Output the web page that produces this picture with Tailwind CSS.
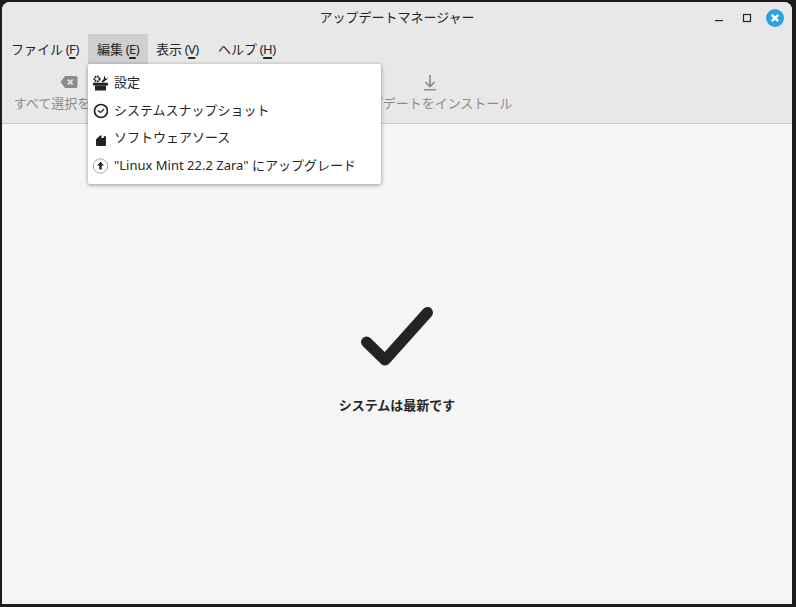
<!DOCTYPE html>
<html lang="ja">
<head>
  <meta charset="UTF-8" />
  <title>アップデートマネージャー</title>
  <script src="https://cdn.jsdelivr.net/npm/@tailwindcss/browser@4"></script>
</head>
<body class="bg-[#1c1c1c] w-[796px] h-[607px] overflow-hidden font-['Noto_Sans','Noto_Sans_CJK_JP',sans-serif] text-[13px] text-[#262626]">
  <div class="relative ml-[2px] mt-[2px] w-[790px] h-[602px] rounded-t-[8px] bg-[#f5f5f5] flex flex-col overflow-hidden">

    <!-- title bar -->
    <header class="relative h-[32px] shrink-0 bg-[#e8e8e8] flex items-center justify-center">
      <span>アップデートマネージャー</span>
      <div class="absolute right-[8px] top-[7px] flex items-center gap-[10px]">
        <svg width="16" height="18" viewBox="0 0 16 18"><rect x="1" y="11" width="8" height="1.2" fill="#262626"/></svg>
        <svg width="16" height="18" viewBox="0 0 16 18"><rect x="3.500" y="5.500" width="7" height="7" fill="none" stroke="#262626" stroke-width="1.200"/></svg>
        <svg width="18" height="18" viewBox="0 0 18 18"><circle cx="9" cy="9" r="9" fill="#2ba3e0"/><path d="M5.800 5.800l6.400 6.400M12.200 5.800l-6.400 6.400" stroke="#fff" stroke-width="2.400"/></svg>
      </div>
    </header>

    <!-- menu bar -->
    <nav class="h-[30px] shrink-0 bg-[#e8e8e8] flex">
      <div class="w-[86px] pl-[9px] pt-[2px] flex items-center whitespace-pre">ファイル<span class="tracking-[-0.6px]"> (<u class="decoration-[1.5px] underline-offset-[3px]">F</u>)</span></div>
      <div class="w-[60px] pl-[9px] pt-[2px] flex items-center bg-[#cfcfcf] whitespace-pre">編集<span class="tracking-[-0.6px]"> (<u class="decoration-[1.5px] underline-offset-[3px]">E</u>)</span></div>
      <div class="w-[61px] pl-[8px] pt-[2px] flex items-center whitespace-pre">表示<span class="tracking-[-0.6px]"> (<u class="decoration-[1.5px] underline-offset-[3px]">V</u>)</span></div>
      <div class="pl-[9px] pt-[2px] flex items-center whitespace-pre">ヘルプ<span class="tracking-[-0.6px]"> (<u class="decoration-[1.5px] underline-offset-[3px]">H</u>)</span></div>
    </nav>

    <!-- toolbar -->
    <div class="h-[60px] shrink-0 bg-[#e8e8e8] border-b border-[#c8c8c8] flex text-[#8c8c8c]">
      <div class="ml-[8px] w-[110px] flex flex-col items-center pt-[11px] gap-[5px]">
        <svg class="ml-[8px]" width="18" height="14" viewBox="0 0 18 14"><path fill-rule="evenodd" fill="#8c8c8c" d="M5 1h11a1.500 1.500 0 0 1 1.500 1.500v9A1.500 1.500 0 0 1 16 13H5L0.500 7zM8.500 4L7.300 5.200 9.100 7 7.300 8.800 8.500 10l1.800-1.800L12.100 10l1.200-1.200L11.500 7l1.800-1.800L12.100 4l-1.800 1.800z"/></svg>
        <span class="whitespace-nowrap">すべて選択を解除</span>
      </div>
      <div class="ml-auto mr-[287px] w-[150px] flex flex-col items-center pt-[10px] gap-[2px]">
        <svg width="16" height="18" viewBox="0 0 16 18"><path d="M8 1v11M3.500 8L8 12.500 12.500 8" fill="none" stroke="#8c8c8c" stroke-width="1.700"/><rect x="2" y="15" width="12" height="1.500" fill="#8c8c8c"/></svg>
        <span class="whitespace-nowrap mr-[4px]">アップデートをインストール</span>
      </div>
    </div>

    <!-- status -->
    <main class="flex-1 flex flex-col items-center pt-[183px]">
      <svg width="76" height="64" viewBox="0 0 76 64"><path d="M7.500 35L26 53 68.500 5.500" fill="none" stroke="#232323" stroke-width="11" stroke-linecap="round" stroke-linejoin="round"/></svg>
      <p class="mt-[25px] font-bold">システムは最新です</p>
    </main>

    <!-- edit menu -->
    <div class="absolute left-[86px] top-[62px] w-[293px] h-[120px] bg-white rounded-[2px] shadow-[0_1px_4px_rgba(0,0,0,0.4)] py-[4px] flex flex-col">
      <div class="h-[28px] pt-[1px] flex items-center gap-[6px] pl-[4px]">
        <svg width="16" height="16" viewBox="0 0 16 16" fill="#232323"><circle cx="5" cy="4" r="2.500" fill="none" stroke="#232323" stroke-width="2" stroke-dasharray="1.600 0.700"/><path d="M9.500 6.800L12 3.800a2.500 2.500 0 0 1 1-3L13 3l1.500 1 1-2a3 3 0 0 1-2.300 3.500L11.500 7.500z"/><rect x="1" y="7.800" width="15" height="2.600" rx="0.500"/><path d="M3 10.400h11V15.500H3z"/></svg>
        <span>設定</span>
      </div>
      <div class="h-[28px] pt-[1px] flex items-center gap-[6px] pl-[4px]">
        <svg width="16" height="16" viewBox="0 0 16 16"><circle cx="9" cy="8" r="6.500" fill="none" stroke="#232323" stroke-width="1.700"/><path d="M5.800 7.500L8.700 9.500 12 6" fill="none" stroke="#232323" stroke-width="1.200"/></svg>
        <span>システムスナップショット</span>
      </div>
      <div class="h-[28px] flex items-center gap-[6px] pl-[4px]">
        <svg width="16" height="16" viewBox="0 0 16 16"><path fill="#232323" d="M4 9.500L8 5.500 9.500 5.500V8H11.500L12 6 14 6.500V15a1 1 0 0 1-1 1H5a1 1 0 0 1-1-1z"/></svg>
        <span>ソフトウェアソース</span>
      </div>
      <div class="h-[28px] flex items-center gap-[6px] pl-[4px]">
        <svg width="16" height="16" viewBox="0 0 16 16"><circle cx="8.500" cy="8" r="7.200" fill="#fff" stroke="#a8a8a8" stroke-width="1"/><path d="M8.500 3.800L12 7.500H9.700v4H7.300v-4H5z" fill="#232323"/></svg>
        <span>"Linux Mint 22.2 Zara" にアップグレード</span>
      </div>
    </div>
  </div>
</body>
</html>
